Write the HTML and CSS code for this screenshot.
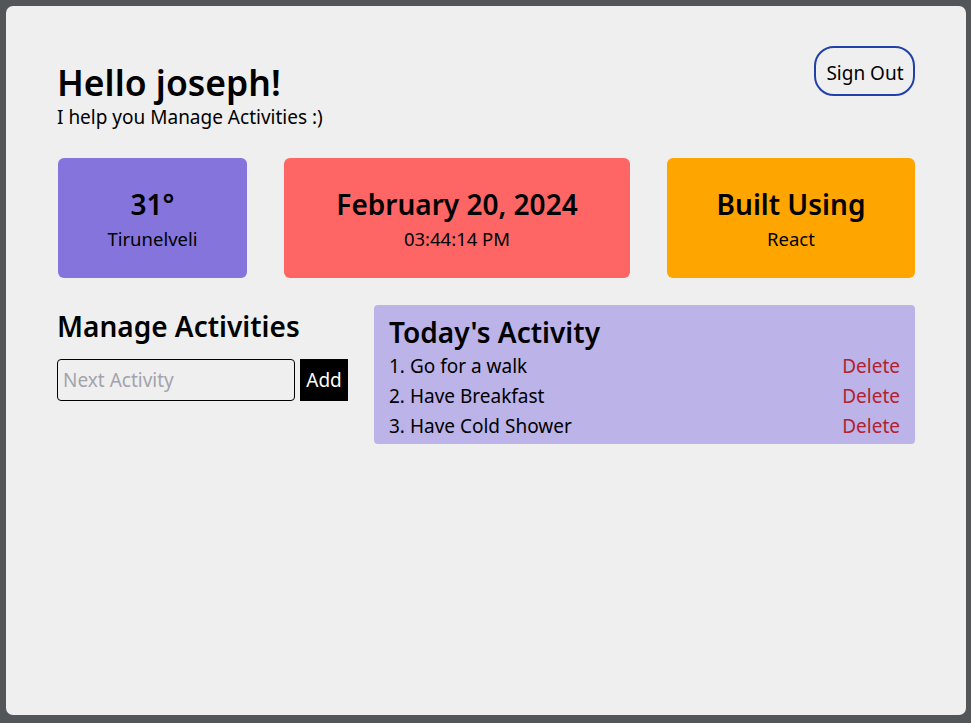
FILE: index.html
```html
<!DOCTYPE html>
<html>
<head>
<meta charset="utf-8">
<link rel="stylesheet" href="styles.css">
</head>
<body>
<div class="panel">
  <header class="header">
    <div class="greeting">
      <h1 class="title">Hello joseph!</h1>
      <p class="subtitle">I help you Manage Activities :)</p>
    </div>
    <button class="signout">Sign Out</button>
  </header>
  <section class="cards">
    <div class="card card-weather">
      <div class="card-main">31°</div>
      <div class="card-sub">Tirunelveli</div>
    </div>
    <div class="card card-date">
      <div class="card-main">February 20, 2024</div>
      <div class="card-sub">03:44:14 PM</div>
    </div>
    <div class="card card-built">
      <div class="card-main">Built Using</div>
      <div class="card-sub">React</div>
    </div>
  </section>
  <section class="bottom">
    <div class="manage">
      <h2 class="manage-title">Manage Activities</h2>
      <form class="add-form">
        <input class="add-input" type="text" placeholder="Next Activity">
        <button class="add-btn" type="button">Add</button>
      </form>
    </div>
    <div class="today">
      <h2 class="today-title">Today's Activity</h2>
      <ul class="list">
        <li class="item"><span>1. Go for a walk</span><span class="del">Delete</span></li>
        <li class="item"><span>2. Have Breakfast</span><span class="del">Delete</span></li>
        <li class="item"><span>3. Have Cold Shower</span><span class="del">Delete</span></li>
      </ul>
    </div>
  </section>
</div>
</body>
</html>
```
FILE: styles.css
```css
* { box-sizing: border-box; }
html, body { margin: 0; padding: 0; }
body {
  background: #525659;
  padding: 6px 5px 8px 6px;
  height: 723px;
  font-family: "Noto Sans", "Open Sans", sans-serif;
  color: #000;
}
.panel {
  background: #efefef;
  border-radius: 7px;
  height: 709px;
  padding: 40px 51px 0 51px;
}
.header {
  display: flex;
  justify-content: space-between;
  align-items: flex-start;
}
.greeting { padding-top: 14px; }
.title {
  margin: 0;
  font-size: 35.5px;
  font-weight: 600;
  line-height: 44px;
}
.subtitle {
  margin: 0;
  font-size: 19px;
  line-height: 27px;
}
.signout {
  font-family: inherit;
  font-size: 19px;
  background: transparent;
  border: 2px solid #2141a8;
  border-radius: 20px;
  width: 101px;
  height: 50px;
  padding: 0 0 0 1px;
  line-height: 50px;
  color: #000;
}
.cards {
  display: flex;
  gap: 37px;
  margin-top: 27px;
  padding-left: 1px;
}
.card {
  height: 120px;
  border-radius: 6px;
  padding-top: 2px;
  display: flex;
  flex-direction: column;
  align-items: center;
  justify-content: center;
}
.card-weather { width: 189px; background: #8474db; }
.card-date { width: 346px; background: #fe6665; }
.card-built { width: 248px; background: #ffa500; }
.card-main { font-size: 28px; font-weight: 600; line-height: 36px; }
.card-sub { font-size: 18.5px; line-height: 26px; margin-top: 4px; }
.bottom {
  display: flex;
  justify-content: space-between;
  align-items: flex-start;
  margin-top: 27px;
}
.manage-title {
  margin: 0;
  font-size: 28px;
  font-weight: 600;
  line-height: 42px;
}
.add-form {
  display: flex;
  gap: 5px;
  margin-top: 12px;
}
.add-input {
  width: 238px;
  height: 42px;
  border: 1px solid #000;
  border-radius: 4px;
  background: transparent;
  font-family: inherit;
  font-size: 19px;
  padding: 0 5px;
}
.add-input::placeholder { color: #a3a3ab; }
.add-btn {
  width: 48px;
  height: 42px;
  background: #000;
  color: #fff;
  border: none;
  font-family: inherit;
  font-size: 19px;
  padding: 0;
}
.today {
  width: 541px;
  background: #bcb3e8;
  border-radius: 4px;
  padding: 8px 15px 3px 15px;
}
.today-title {
  margin: 0;
  font-size: 28px;
  font-weight: 600;
  line-height: 38px;
}
.list { list-style: none; margin: 0; padding: 0; }
.item {
  display: flex;
  justify-content: space-between;
  font-size: 19px;
  line-height: 30px;
}
.del { color: #b3212f; }
```
